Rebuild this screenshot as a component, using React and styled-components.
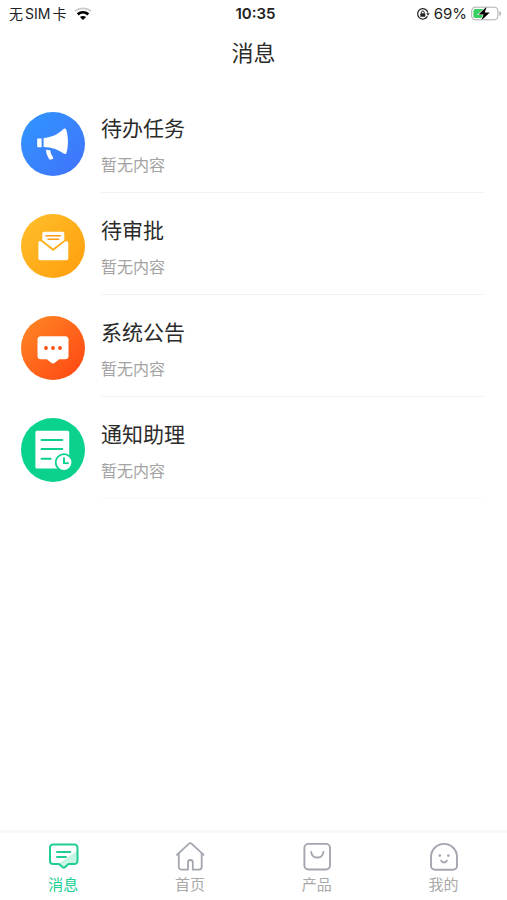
import styled, { createGlobalStyle } from "styled-components";

const GlobalStyle = createGlobalStyle`
  * {
    box-sizing: border-box;
  }
  body {
    margin: 0;
    background-color: #fff;
    font-family: "Liberation Sans", "Noto Sans CJK SC", sans-serif;
  }
`;

const messages = [
  { title: "待办任务", text: "暂无内容", icon: <HornIcon />, from: "#2f97ff", to: "#4271fb" },
  { title: "待审批", text: "暂无内容", icon: <MailIcon />, from: "#ffbf2b", to: "#ff9d0c" },
  { title: "系统公告", text: "暂无内容", icon: <NoticeIcon />, from: "#ff8a26", to: "#ff4311" },
  { title: "通知助理", text: "暂无内容", icon: <NoteIcon />, from: "#0ad48d", to: "#0ad08c" },
];

const tabs = [
  { name: "消息", icon: <ChatTabIcon />, active: true },
  { name: "首页", icon: <HomeTabIcon /> },
  { name: "产品", icon: <BagTabIcon /> },
  { name: "我的", icon: <FaceTabIcon /> },
];

export default function App() {
  return (
    <Page>
      <GlobalStyle />
      <StatusBar>
        <StatusSide>
          <Carrier>
            <span>无</span>
            <span>SIM</span>
            <span>卡</span>
          </Carrier>
          <WifiIcon />
        </StatusSide>
        <Time>10:35</Time>
        <StatusSide $end>
          <LockIcon />
          <Percent>69%</Percent>
          <BatteryIcon />
        </StatusSide>
      </StatusBar>
      <Header>
        <h1>消息</h1>
      </Header>
      <List>
        {messages.map((item) => (
          <MessageCom key={item.title} {...item} />
        ))}
      </List>
      <TabBar>
        {tabs.map((tab) => (
          <Tab key={tab.name} type="button" $active={tab.active}>
            {tab.icon}
            <span>{tab.name}</span>
          </Tab>
        ))}
      </TabBar>
    </Page>
  );
}

function MessageCom(props) {
  return (
    <Message>
      <Avatar $from={props.from} $to={props.to}>
        {props.icon}
      </Avatar>
      <MessageBody>
        <h2>{props.title}</h2>
        <p>{props.text}</p>
      </MessageBody>
    </Message>
  );
}

function WifiIcon() {
  return (
    <svg width="18" height="14" viewBox="0 0 18 14" fill="none">
      <path d="M1 4C5.4.4 12.600.4 17 4" stroke="#c9c9c9" strokeWidth="1.8" />
      <path d="M3.700 7.400C6.800 4.700 11.200 4.700 14.300 7.400" stroke="#000" strokeWidth="2.8" />
      <path d="M9 13 5.900 10.100C7.700 8.700 10.300 8.700 12.100 10.100Z" fill="#000" />
    </svg>
  );
}

function LockIcon() {
  return (
    <svg width="14" height="14" viewBox="0 0 14 14" fill="none" stroke="#222">
      <path d="M11.4 9.4A5.2 5.2 0 1 1 11.9 5.6" strokeWidth="1.2" />
      <path d="M10.3 6.2h3.4L12 8.8z" fill="#222" stroke="none" />
      <path d="M5.4 6.6V5.4a1.4 1.4 0 0 1 2.8 0v1.2" strokeWidth="1" />
      <rect x="4.3" y="6.3" width="5" height="3.5" rx=".6" fill="#222" stroke="none" />
    </svg>
  );
}

function BatteryIcon() {
  return (
    <svg width="31" height="16" viewBox="0 0 31 16">
      <rect x=".7" y="1.2" width="26.2" height="12.6" rx="3.4" fill="#fff" stroke="#adadad" />
      <path d="M4.2 3h9.8v9H4.2A1.8 1.8 0 0 1 2.4 10.2V4.8A1.8 1.8 0 0 1 4.2 3z" fill="#39cf62" />
      <path d="M28.4 5.1c2.2.8 2.2 4 0 4.8z" fill="#adadad" />
      <path
        d="M15.8.6 7.6 8.4h5l-2.300 6.200 8.500-8h-5.100z"
        fill="#000"
        stroke="#fff"
        strokeWidth="1.2"
        paintOrder="stroke"
      />
    </svg>
  );
}

function HornIcon() {
  return (
    <svg viewBox="0 0 64 64" fill="#fff">
      <path d="M17 26.5h3.6v8.8H17a.8.8 0 0 1-.8-.8v-7.2a.8.8 0 0 1 .8-.8z" />
      <path d="M22.600 26c8.200-.8 14-3.600 19.400-8.600 1.400-1.300 2.800-1 3.400.8 2 6.600 2 16 .2 22.200-.5 1.600-1.900 1.900-3.300.9-5.600-4-11.400-6-19.700-6.400z" />
      <path d="M25 37.700l4.200.6c.3 2.600 1.300 4.600 2.700 6.800.7 1.100.2 1.900-.8 2.200l-1.200.3c-.9.2-1.500 0-2-.9-1.700-3-2.700-5.600-2.900-9z" />
    </svg>
  );
}

function MailIcon() {
  return (
    <svg viewBox="0 0 64 64" fill="#fff">
      <path d="M18.5 27.300h1.200L32.200 37l12.300-9.700h1.200a1.600 1.600 0 0 1 1.600 1.600v15.400a1.900 1.900 0 0 1-1.900 1.900H19.300a1.900 1.900 0 0 1-1.900-1.900V28.400a1.100 1.100 0 0 1 1.100-1.100z" />
      <path d="M23.200 17.700h18.200a1.900 1.900 0 0 1 1.900 1.900v6.400L32.200 34.600 21.300 26v-6.400a1.900 1.900 0 0 1 1.900-1.900z" />
      <path
        d="M25 21.700h14.500M27 25.200h10.800"
        fill="none"
        stroke="#ff9e16"
        strokeWidth="1.5"
        strokeLinecap="round"
      />
    </svg>
  );
}

function NoticeIcon() {
  return (
    <svg viewBox="0 0 64 64" fill="#fff">
      <path d="M20 20.300h24a3.500 3.500 0 0 1 3.500 3.500v15.900a3.500 3.500 0 0 1-3.500 3.500h-5.800l-4.400 3.500a3 3 0 0 1-3.600 0l-4.400-3.500H20a3.500 3.500 0 0 1-3.500-3.500V23.800a3.500 3.500 0 0 1 3.500-3.500z" />
      <g fill="#fa4e12">
        <circle cx="25" cy="32" r="1.9" />
        <circle cx="32" cy="32" r="1.9" />
        <circle cx="39" cy="32" r="1.9" />
      </g>
    </svg>
  );
}

function NoteIcon() {
  return (
    <svg viewBox="0 0 64 64" fill="none" strokeLinecap="round">
      <rect x="14.4" y="12.8" width="33.8" height="37.8" rx="1.5" fill="#fff" />
      <path d="M20.5 22h20.8M20.5 31h20.8M20.5 40.700h9.200" stroke="#0ad08c" strokeWidth="1.9" />
      <circle cx="43" cy="44.500" r="9.200" fill="#0ad08c" />
      <circle cx="43" cy="44.500" r="7.400" fill="#fff" />
      <path d="M43 40.200v4.900h4" stroke="#0ad08c" strokeWidth="1.9" />
    </svg>
  );
}

function ChatTabIcon() {
  return (
    <svg width="32" height="32" viewBox="-1 0 32 32" fill="none" stroke="#20ce93" strokeWidth="2">
      <path d="M29 11v10a3 3 0 0 1-3 3h-5.500L16 27.600 11.500 24H10z" fill="#c8f4e3" stroke="none" />
      <path
        d="M5 4.500h21.500a3 3 0 0 1 3 3v13.500a3 3 0 0 1-3 3h-6l-3.300 3a2 2 0 0 1-2.800 0l-3.400-3H5a3 3 0 0 1-3-3V7.500a3 3 0 0 1 3-3z"
        strokeLinejoin="round"
      />
      <path d="M9 12h13.300M9 17h9" strokeLinecap="round" />
    </svg>
  );
}

function HomeTabIcon() {
  return (
    <svg
      width="32"
      height="32"
      viewBox="0 0 32 32"
      fill="none"
      stroke="#a3a6af"
      strokeWidth="1.8"
      strokeLinecap="round"
      strokeLinejoin="round"
    >
      <path d="M2.900 14.900 15 3.700a1.800 1.800 0 0 1 2.500 0l12.100 11.200" />
      <path d="M4.800 13.400v13.600a2.700 2.700 0 0 0 2.700 2.700H14v-7.300a2.400 2.400 0 0 1 4.800 0v7.300H25a2.700 2.700 0 0 0 2.700-2.700V13.400" />
    </svg>
  );
}

function BagTabIcon() {
  return (
    <svg width="32" height="32" viewBox="0 0 32 32" fill="none" stroke="#a3a6af" strokeWidth="1.9">
      <rect x="3.400" y="3.900" width="25.600" height="25.600" rx="4" />
      <path d="M10.200 12c.8 7.400 11.400 7.400 12.200 0" strokeLinecap="round" />
    </svg>
  );
}

function FaceTabIcon() {
  return (
    <svg
      width="32"
      height="32"
      viewBox="0 0 32 32"
      fill="none"
      stroke="#a3a6af"
      strokeWidth="1.9"
      strokeLinecap="round"
    >
      <path d="M3 16.900a13 13 0 0 1 26 0v8.800a4 4 0 0 1-4 4H7a4 4 0 0 1-4-4z" />
      <path d="M13.200 20.700c1.100 2.300 4.600 2.300 5.700 0" />
      <circle cx="11.800" cy="15.600" r="1.300" fill="#a3a6af" stroke="none" />
      <circle cx="20.300" cy="15.600" r="1.300" fill="#a3a6af" stroke="none" />
    </svg>
  );
}

const Page = styled.div`
  min-height: 100vh;
  display: flex;
  flex-direction: column;
  background-color: #fff;
`;

const StatusBar = styled.div`
  height: 28px;
  padding: 0 5px 0 9px;
  display: grid;
  grid-template-columns: 1fr auto 1fr;
  align-items: center;
  font-family: Inter, "Noto Sans CJK SC", sans-serif;
  font-size: 14px;
  line-height: 20px;
  color: #222;
`;

const StatusSide = styled.div`
  display: flex;
  align-items: center;
  justify-content: ${(props) => (props.$end ? "flex-end" : "flex-start")};
  gap: ${(props) => (props.$end ? "4px" : "8px")};
`;

const Carrier = styled.div`
  display: flex;
  gap: 2px;
`;

const Percent = styled.span`
  font-size: 15px;
`;

const Time = styled.span`
  font-size: 15px;
  font-weight: 600;
`;

const Header = styled.header`
  height: 50px;
  padding-top: 1px;
  display: flex;
  align-items: center;
  justify-content: center;
  h1 {
    margin: 0;
    font-size: 22px;
    line-height: 34px;
    font-weight: 400;
    color: #2b2b2b;
  }
`;

const List = styled.main`
  flex: 1;
  padding: 13px 23px 24px 21px;
`;

const Message = styled.article`
  display: flex;
  gap: 16px;
`;

const Avatar = styled.div`
  flex: none;
  width: 64px;
  height: 64px;
  margin-top: 21px;
  border-radius: 50%;
  background: linear-gradient(135deg, ${(props) => props.$from}, ${(props) => props.$to});
  svg {
    display: block;
    width: 64px;
    height: 64px;
  }
`;

const MessageBody = styled.div`
  flex: 1;
  height: 102px;
  padding-top: 22px;
  border-bottom: 1px solid #f3f3f3;
  ${Message}:last-child & {
    border-color: #f9f9f9;
  }
  h2,
  p {
    margin: 0;
    font-weight: 400;
  }
  h2 {
    font-size: 21px;
    line-height: 32px;
    color: #2b2b2b;
  }
  p {
    margin-top: 9px;
    font-size: 16px;
    line-height: 24px;
    color: #a3a3a3;
  }
`;

const TabBar = styled.nav`
  display: flex;
  height: 70px;
  border-top: 3px solid #f8f8f8;
`;

const Tab = styled.button`
  flex: 1;
  display: flex;
  flex-direction: column;
  align-items: center;
  gap: 2px;
  padding: 7px 0 0;
  border: none;
  background: none;
  font-family: inherit;
  font-size: 15px;
  line-height: 22px;
  color: ${(props) => (props.$active ? "#20ce93" : "#a9a9a9")};
  cursor: pointer;
`;
